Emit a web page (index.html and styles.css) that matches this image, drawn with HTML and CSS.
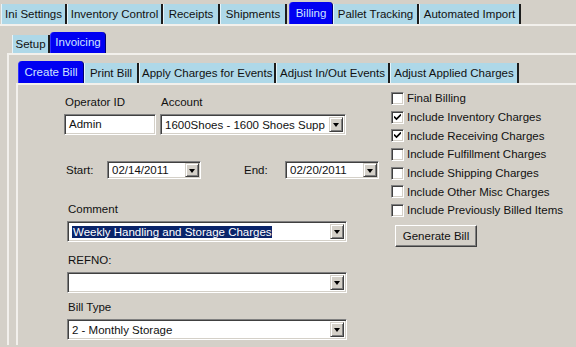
FILE: index.html
```html
<!DOCTYPE html>
<html lang="en">
<head>
  <meta charset="UTF-8">
  <title>Billing - Create Bill</title>
  <link rel="stylesheet" href="styles.css">
</head>
<body>

  <div class="tabrow main-tabs">
    <span class="tab">Ini Settings</span>
    <span class="tab">Inventory Control</span>
    <span class="tab">Receipts</span>
    <span class="tab">Shipments</span>
    <span class="tab active">Billing</span>
    <span class="tab">Pallet Tracking</span>
    <span class="tab">Automated Import</span>
  </div>

  <div class="panel panel-1">
    <div class="tabrow sub-tabs">
      <span class="tab">Setup</span>
      <span class="tab active">Invoicing</span>
    </div>

    <div class="panel panel-2">
      <div class="tabrow bill-tabs">
        <span class="tab active">Create Bill</span>
        <span class="tab">Print Bill</span>
        <span class="tab">Apply Charges for Events</span>
        <span class="tab">Adjust In/Out Events</span>
        <span class="tab">Adjust Applied Charges</span>
      </div>

      <div class="panel panel-3">
        <div class="bill-form">

          <div class="form-left">
            <div class="field-row">
              <div class="field operator">
                <label>Operator ID</label>
                <div class="textbox">Admin</div>
              </div>
              <div class="field account">
                <label>Account</label>
                <div class="combo"><span class="combo-text">1600Shoes - 1600 Shoes Supp</span><span class="drop"><i></i></span></div>
              </div>
            </div>

            <div class="date-row">
              <span class="date-label">Start:</span>
              <div class="combo date"><span class="combo-text">02/14/2011</span><span class="drop"><i></i></span></div>
              <span class="date-label end-label">End:</span>
              <div class="combo date"><span class="combo-text">02/20/2011</span><span class="drop"><i></i></span></div>
            </div>

            <div class="field wide comment">
              <label>Comment</label>
              <div class="combo"><span class="combo-text"><span class="selected">Weekly Handling and Storage Charges</span></span><span class="drop"><i></i></span></div>
            </div>

            <div class="field wide refno">
              <label>REFNO:</label>
              <div class="combo"><span class="combo-text"></span><span class="drop"><i></i></span></div>
            </div>

            <div class="field wide billtype">
              <label>Bill Type</label>
              <div class="combo"><span class="combo-text">2 - Monthly Storage</span><span class="drop"><i></i></span></div>
            </div>
          </div>

          <div class="form-right">
            <div class="check-row"><span class="checkbox"></span>Final Billing</div>
            <div class="check-row"><span class="checkbox checked"><svg viewBox="0 0 7 7" width="7" height="7"><path d="M0 2.5 L2.5 5 L7 0.5" fill="none" stroke="#000" stroke-width="1.6"/></svg></span>Include Inventory Charges</div>
            <div class="check-row"><span class="checkbox checked"><svg viewBox="0 0 7 7" width="7" height="7"><path d="M0 2.5 L2.5 5 L7 0.5" fill="none" stroke="#000" stroke-width="1.6"/></svg></span>Include Receiving Charges</div>
            <div class="check-row"><span class="checkbox"></span>Include Fulfillment Charges</div>
            <div class="check-row"><span class="checkbox"></span>Include Shipping Charges</div>
            <div class="check-row"><span class="checkbox"></span>Include Other Misc Charges</div>
            <div class="check-row"><span class="checkbox"></span>Include Previously Billed Items</div>
            <button class="btn-generate">Generate Bill</button>
          </div>

        </div>
      </div>
    </div>
  </div>

</body>
</html>
```

FILE: styles.css
```css
body {
  margin: 0;
  background-color: #d4d0c8; /* classic dialog grey */
  font-family: "Liberation Sans", Arial, sans-serif;
  font-size: 11.5px;
  color: #111;
  height: 347px;
  overflow: hidden;
}

/* ---- tab rows ---- */

.tabrow {
  display: flex;
  align-items: flex-end;
}

.tab {
  display: block;
  box-sizing: border-box;
  height: 20px;
  line-height: 21px;
  padding: 0 2px;
  text-align: center;
  background-color: #aed8e8;
  border-left: 1px solid #e6f3f8;
  border-right: 2px solid #1c1c1c;
  white-space: nowrap;
}

.tab.active {
  height: 22px;
  line-height: 22px;
  background-color: #0000f2;
  color: #cfe4ff;
  border-left: 1px solid #3030ff;
  border-right: 1px solid #000070;
  border-radius: 4px 4px 0 0;
}

.main-tabs {
  height: 24px;
  padding-left: 1px;
}

/* fixed widths so the tabs line up like the original Swing tabs */
.main-tabs .tab:nth-child(1) { width: 66px; }
.main-tabs .tab:nth-child(2) { width: 96px; }
.main-tabs .tab:nth-child(3) { width: 57px; }
.main-tabs .tab:nth-child(4) { width: 67px; }
.main-tabs .tab:nth-child(5) { width: 44px; margin-left: 2px; }
.main-tabs .tab:nth-child(6) { width: 86px; }
.main-tabs .tab:nth-child(7) { width: 102px; }

.sub-tabs {
  height: 27px;
  padding-left: 5px;
}

.sub-tabs .tab {
  height: 18px;
  line-height: 19px;
}

.sub-tabs .tab:nth-child(1) { width: 38px; }
.sub-tabs .tab:nth-child(2) { width: 56px; height: 21px; line-height: 20px; }

.bill-tabs {
  height: 28px;
  padding-left: 2px;
}

.bill-tabs .tab:nth-child(1) { width: 66px; }
.bill-tabs .tab:nth-child(2) { width: 55px; }
.bill-tabs .tab:nth-child(3) { width: 137px; }
.bill-tabs .tab:nth-child(4) { width: 114px; }
.bill-tabs .tab:nth-child(5) { width: 129px; }

/* ---- panels ---- */

.panel {
  border-top: 2px solid #f2f0ec;
}

.panel-1 {
  padding-left: 7px;
}

.panel-2 {
  border-left: 2px solid #f2f0ec;
  padding-left: 7px;
  height: 290px;
}

.panel-3 {
  border-left: 2px solid #f2f0ec;
  height: 260px;
}

/* ---- form ---- */

.bill-form {
  display: flex;
}

.form-left {
  width: 327px;
  padding: 10px 0 0 46px;
}

.form-right {
  padding-top: 4px;
}

label {
  display: block;
  height: 14px;
  line-height: 14px;
  margin-bottom: 5px;
  padding-left: 1px;
}

.field-row {
  display: flex;
  gap: 4px;
}

.operator {
  width: 92px;
}

.account {
  width: 186px;
}

.textbox,
.combo,
.checkbox {
  background-color: #fff;
  border: 1px solid;
  border-color: #808080 #fff #fff #808080;
  box-shadow: inset 1px 1px 0 #404040, inset -1px -1px 0 #d4d0c8;
}

.textbox {
  height: 19px;
  line-height: 19px;
  padding-left: 4px;
}

.combo {
  display: flex;
  align-items: center;
  height: 19px;
  padding: 0 2px 0 4px;
}

.combo-text {
  flex: 1;
  white-space: nowrap;
  overflow: hidden;
}

.selected {
  background-color: #0a246a;
  color: #fff;
  padding: 1px 0 1px 1px;
}

.drop {
  display: flex;
  align-items: center;
  justify-content: center;
  width: 14px;
  height: 15px;
  background-color: #d4d0c8;
  border: 1px solid;
  border-color: #d4d0c8 #404040 #404040 #d4d0c8;
  box-shadow: inset 1px 1px 0 #fff, inset -1px -1px 0 #808080;
  box-sizing: border-box;
}

.drop i {
  display: block;
  width: 0;
  height: 0;
  border-left: 3.5px solid transparent;
  border-right: 3.5px solid transparent;
  border-top: 4px solid #000;
  margin-top: 1px;
}

.date-row {
  display: flex;
  align-items: center;
  margin-top: 26px;
}

.date-label {
  width: 41px;
  padding-left: 2px;
}

.end-label {
  margin-left: 42px;
  width: 41px;
  padding-left: 1px;
}

.combo.date {
  width: 87px;
  height: 16px;
  padding-right: 1px;
}

.combo.date .drop {
  height: 14px;
}

.wide {
  width: 280px;
  margin-left: 3px;
}

.comment {
  margin-top: 23px;
}

.refno {
  margin-top: 11px;
}

.billtype {
  margin-top: 7px;
}

.check-row {
  display: flex;
  align-items: center;
  height: 18.7px;
  white-space: nowrap;
}

.checkbox {
  display: flex;
  align-items: center;
  justify-content: center;
  width: 11px;
  height: 11px;
  margin-right: 3px;
}

.btn-generate {
  display: block;
  margin: 5px 0 0 4px;
  width: 82px;
  height: 22px;
  padding: 0;
  font-family: "Liberation Sans", Arial, sans-serif;
  font-size: 11.5px;
  color: #111;
  background-color: #d4d0c8;
  border: 1px solid;
  border-color: #fff #404040 #404040 #fff;
  box-shadow: inset -1px -1px 0 #808080;
}
```
